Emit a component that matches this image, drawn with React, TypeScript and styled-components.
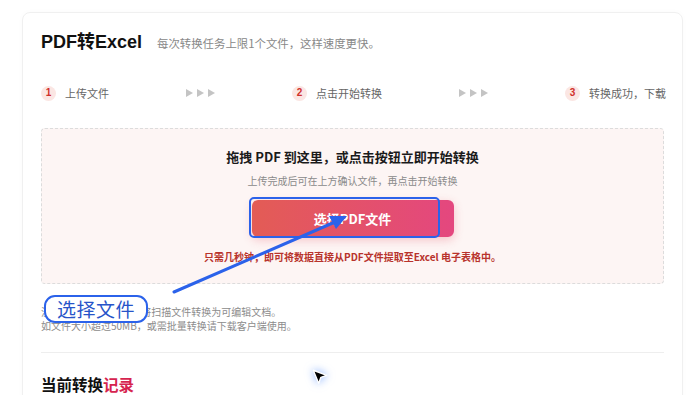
import React from 'react'
import styled, { createGlobalStyle } from 'styled-components'

const GlobalStyle = createGlobalStyle`
  html, body {
    margin: 0;
    padding: 0;
    background: #ffffff;
  }
  body {
    font-family: "Noto Sans CJK SC", "Noto Sans", "Liberation Sans", sans-serif;
    color: #222;
  }
`

const Page = styled.div`
  position: relative;
  width: 700px;
  height: 395px;
  overflow: hidden;
  background: #fff;
`

const Card = styled.div`
  box-sizing: border-box;
  width: 661px;
  height: 400px;
  margin: 12px 0 0 22px;
  padding: 17px 18px 0;
  border: 1px solid #f0f0f0;
  border-radius: 8px;
  box-shadow: 0 0 6px rgba(0, 0, 0, 0.02);
`

const TitleRow = styled.div`
  display: flex;
  align-items: baseline;
  gap: 15px;
`

const Title = styled.h1`
  margin: 0;
  font-size: 18px;
  line-height: 24px;
  font-weight: 700;
  color: #111;
  font-family: "Liberation Sans", "Noto Sans CJK SC", sans-serif;
`

const Subtitle = styled.span`
  font-size: 11.4px;
  color: #888;
`

const Steps = styled.div`
  display: flex;
  align-items: center;
  gap: 77px;
  margin-top: 31px;
  white-space: nowrap;
`

const Step = styled.div`
  display: flex;
  align-items: center;
  gap: 9px;
  font-size: 11px;
  line-height: 16px;
  color: #666;
`

const Badge = styled.span`
  display: inline-flex;
  align-items: center;
  justify-content: center;
  width: 15px;
  height: 15px;
  border-radius: 50%;
  background: #fbe6e3;
  color: #d0302b;
  font-size: 10px;
  font-weight: 700;
  font-family: "Liberation Sans", sans-serif;
`

const Arrows = styled.span`
  display: flex;
  gap: 4px;
`

const Tri = styled.span`
  width: 0;
  height: 0;
  border-top: 4px solid transparent;
  border-bottom: 4px solid transparent;
  border-left: 7px solid #c4c4c4;
`

const DropZone = styled.div`
  box-sizing: border-box;
  margin-top: 27px;
  height: 156px;
  padding-top: 19px;
  border: 1px dashed #dcdcdc;
  border-radius: 4px;
  background: #fdf5f4;
  display: flex;
  flex-direction: column;
  align-items: center;
`

const DropTitle = styled.div`
  font-size: 13px;
  line-height: 18px;
  font-weight: 700;
  color: #1a1a1a;
`

const DropHint = styled.div`
  margin-top: 8px;
  font-size: 10px;
  line-height: 14px;
  color: #8a8a8a;
`

const PickButton = styled.button`
  margin-top: 12px;
  width: 202px;
  height: 37px;
  border: none;
  border-radius: 6px;
  background: linear-gradient(90deg, #e35c55 0%, #e4477f 100%);
  box-shadow: 0 3px 10px rgba(228, 80, 100, 0.3);
  color: #fff;
  font-size: 13px;
  font-weight: 700;
  font-family: "Noto Sans CJK SC", sans-serif;
`

const Promo = styled.div`
  margin-top: 13px;
  font-size: 10px;
  line-height: 14px;
  font-weight: 700;
  color: #b8332c;
`

const Notes = styled.div`
  margin-top: 21px;
  font-size: 10px;
  line-height: 14px;
  color: #8c8c8c;
`

const Divider = styled.hr`
  margin: 19px 0 0;
  border: none;
  border-top: 1px solid #eeeeee;
`

const RecordTitle = styled.h2`
  margin: 21px 0 0;
  font-size: 15.5px;
  line-height: 20px;
  font-weight: 700;
  color: #111;
`

const Accent = styled.span`
  color: #d6244f;
`

const Highlight = styled.div`
  position: absolute;
  left: 249px;
  top: 197px;
  width: 187px;
  height: 37px;
  border: 2.5px solid #2b62ea;
  border-radius: 5px;
`

const Callout = styled.div`
  position: absolute;
  left: 44px;
  top: 295px;
  box-sizing: border-box;
  width: 104px;
  height: 28px;
  border: 2px solid #2b62ea;
  border-radius: 11px;
  background: #fff;
  color: #2754c9;
  font-size: 19px;
  line-height: 24px;
  text-align: center;
  letter-spacing: 0.5px;
`

const ArrowSvg = styled.svg`
  position: absolute;
  left: 0;
  top: 0;
  pointer-events: none;
`

const Cursor = styled.svg`
  position: absolute;
  left: 311px;
  top: 368px;
  filter: drop-shadow(0 0 4px rgba(80, 140, 255, 0.7));
`

export default function App() {
  return (
    <Page>
      <GlobalStyle />
      <Card>
        <TitleRow>
          <Title>PDF转Excel</Title>
          <Subtitle>每次转换任务上限1个文件，这样速度更快。</Subtitle>
        </TitleRow>
        <Steps>
          <Step>
            <Badge>1</Badge>上传文件
          </Step>
          <Arrows>
            <Tri />
            <Tri />
            <Tri />
          </Arrows>
          <Step>
            <Badge>2</Badge>点击开始转换
          </Step>
          <Arrows>
            <Tri />
            <Tri />
            <Tri />
          </Arrows>
          <Step>
            <Badge>3</Badge>转换成功，下载
          </Step>
        </Steps>
        <DropZone>
          <DropTitle>拖拽 PDF 到这里，或点击按钮立即开始转换</DropTitle>
          <DropHint>上传完成后可在上方确认文件，再点击开始转换</DropHint>
          <PickButton>选择PDF文件</PickButton>
          <Promo>只需几秒钟，即可将数据直接从PDF文件提取至Excel 电子表格中。</Promo>
        </DropZone>
        <Notes>
          <div>注：支持OCR识别，可将扫描文件转换为可编辑文档。</div>
          <div>如文件大小超过50MB，或需批量转换请下载客户端使用。</div>
        </Notes>
        <Divider />
        <RecordTitle>
          当前转换<Accent>记录</Accent>
        </RecordTitle>
      </Card>

      <Highlight />
      <ArrowSvg width="700" height="395" viewBox="0 0 700 395">
        <line x1="174" y1="292" x2="335" y2="222" stroke="#2b62ea" strokeWidth="3" strokeLinecap="round" />
        <polygon points="347,216 329,216 336,229" fill="#2b62ea" />
      </ArrowSvg>
      <Callout>选择文件</Callout>
      <Cursor width="18" height="18" viewBox="0 0 16 16">
        <path d="M2 2 L14 6.5 L8.8 8.3 L6.8 13.5 Z" fill="#000" stroke="#fff" strokeWidth="1.2" strokeLinejoin="round" />
      </Cursor>
    </Page>
  )
}
